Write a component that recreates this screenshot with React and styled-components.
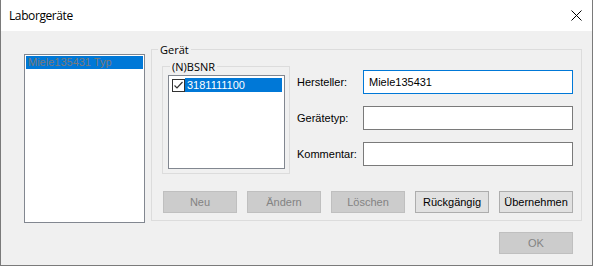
import React from 'react'
import styled, { createGlobalStyle } from 'styled-components'

const GlobalStyle = createGlobalStyle`
  html, body { margin:0; padding:0; background:#ffffff; }
  body { font-family:"Liberation Sans", Arial, sans-serif; font-size:11px; color:#000; }
`

const Window = styled.div`
  width:593px;
  height:266px;
  box-sizing:border-box;
  border:1px solid #7a7a7a;
  border-top:none;
  background:#f0f0f0;
  display:flex;
  flex-direction:column;
`

const TitleBar = styled.div`
  height:31px;
  flex:none;
  background:#ffffff;
  display:flex;
  align-items:center;
  justify-content:space-between;
  padding:0 10px 0 8px;
  font-family:"Open Sans", sans-serif;
  font-size:12px;
  letter-spacing:-0.4px;
`

const CloseButton = styled.svg`
  width:11px;
  height:11px;
  display:block;
`

const Body = styled.div`
  flex:1;
  display:flex;
  flex-direction:column;
  padding:12px 10px 0 23px;
`

const TopRow = styled.div`
  display:flex;
  align-items:flex-start;
  gap:6px;
`

const ListBox = styled.div`
  width:${p => p.$w}px;
  height:${p => p.$h}px;
  margin-top:${p => p.$top || 0}px;
  box-sizing:border-box;
  background:#ffffff;
  border:1px solid #828790;
  padding:1px;
  flex:none;
`

const ListItem = styled.div`
  height:13px;
  line-height:13px;
  padding-left:2px;
  background:#0078d7;
  color:#7a7a7a;
  white-space:nowrap;
  overflow:hidden;
`

const GroupBox = styled.fieldset`
  margin:0;
  min-width:0;
  box-sizing:border-box;
  width:${p => p.$w}px;
  border:1px solid #dcdcdc;
  padding:${p => p.$pad};
  display:flex;
  flex-direction:column;
  flex:none;
`

const Legend = styled.legend`
  font-family:"Open Sans", sans-serif;
  font-size:11px;
  line-height:13px;
  padding:0 2px;
  margin-left:${p => p.$indent}px;
`

const MainRow = styled.div`
  display:flex;
  align-items:flex-start;
  gap:7px;
`

const CheckRow = styled.div`
  display:flex;
  align-items:flex-start;
  height:14px;
  margin-top:1px;
  padding-left:2px;
`

const CheckBox = styled.svg`
  width:13px;
  height:13px;
  margin-top:1px;
  display:block;
  flex:none;
`

const SelectedText = styled.div`
  flex:1;
  height:14px;
  line-height:14px;
  background:#0078d7;
  color:#ffffff;
  padding-left:2px;
  margin-right:1px;
`

const Form = styled.div`
  margin-top:10px;
  display:grid;
  grid-template-columns:66px 210px;
  grid-auto-rows:24px;
  row-gap:12px;
  align-items:center;
`

const Label = styled.label`
  white-space:nowrap;
`

const TextInput = styled.input`
  width:210px;
  height:24px;
  box-sizing:border-box;
  margin:0;
  border:1px solid ${p => (p.$focused ? '#0078d7' : '#7a7a7a')};
  padding:0 0 0 5px;
  font-family:"Liberation Sans", Arial, sans-serif;
  font-size:11px;
  color:#000;
  background:#ffffff;
  outline:none;
`

const ButtonRow = styled.div`
  display:flex;
  gap:10px;
  margin:17px 0 0 1px;
`

const Button = styled.button`
  width:74px;
  height:22px;
  box-sizing:border-box;
  padding:0;
  margin:0;
  font-family:"Liberation Sans", Arial, sans-serif;
  font-size:11px;
  background:${p => (p.disabled ? '#cccccc' : '#e1e1e1')};
  border:1px solid ${p => (p.disabled ? '#bfbfbf' : '#adadad')};
  color:${p => (p.disabled ? '#838383' : '#000000')};
  border-radius:0;
`

const Footer = styled.div`
  display:flex;
  justify-content:flex-end;
  margin:9px 9px 0 0;
`

const App = () => {
  return (
    <>
      <GlobalStyle />
      <Window>
        <TitleBar>
          <span>Laborgeräte</span>
          <CloseButton viewBox="0 0 11 11">
            <path d="M0.5 0.5 L10.5 10.5 M10.5 0.5 L0.5 10.5" stroke="#000" strokeWidth="1" fill="none" />
          </CloseButton>
        </TitleBar>
        <Body>
          <TopRow>
            <ListBox $w={121} $h={169} $top={11}>
              <ListItem>Miele135431 Typ</ListItem>
            </ListBox>
            <GroupBox $w={431} $pad="4px 7px 7px 10px">
              <Legend $indent={-4}>Gerät</Legend>
              <MainRow>
                <GroupBox $w={128} $pad="2px 5px 4px 5px">
                  <Legend $indent={2}>(N)BSNR</Legend>
                  <ListBox $w={117} $h={94}>
                    <CheckRow>
                      <CheckBox viewBox="0 0 13 13">
                        <rect x="0.5" y="0.5" width="12" height="12" fill="#fff" stroke="#333" />
                        <path d="M2.5 6.5 L5 9 L10.5 3" stroke="#333" strokeWidth="1.2" fill="none" />
                      </CheckBox>
                      <SelectedText>3181111100</SelectedText>
                    </CheckRow>
                  </ListBox>
                </GroupBox>
                <Form>
                  <Label>Hersteller:</Label>
                  <TextInput $focused readOnly defaultValue="Miele135431" />
                  <Label>Gerätetyp:</Label>
                  <TextInput readOnly defaultValue="" />
                  <Label>Kommentar:</Label>
                  <TextInput readOnly defaultValue="" />
                </Form>
              </MainRow>
              <ButtonRow>
                <Button disabled>Neu</Button>
                <Button disabled>Ändern</Button>
                <Button disabled>Löschen</Button>
                <Button>Rückgängig</Button>
                <Button>Übernehmen</Button>
              </ButtonRow>
            </GroupBox>
          </TopRow>
          <Footer>
            <Button disabled>OK</Button>
          </Footer>
        </Body>
      </Window>
    </>
  )
}

export default App
